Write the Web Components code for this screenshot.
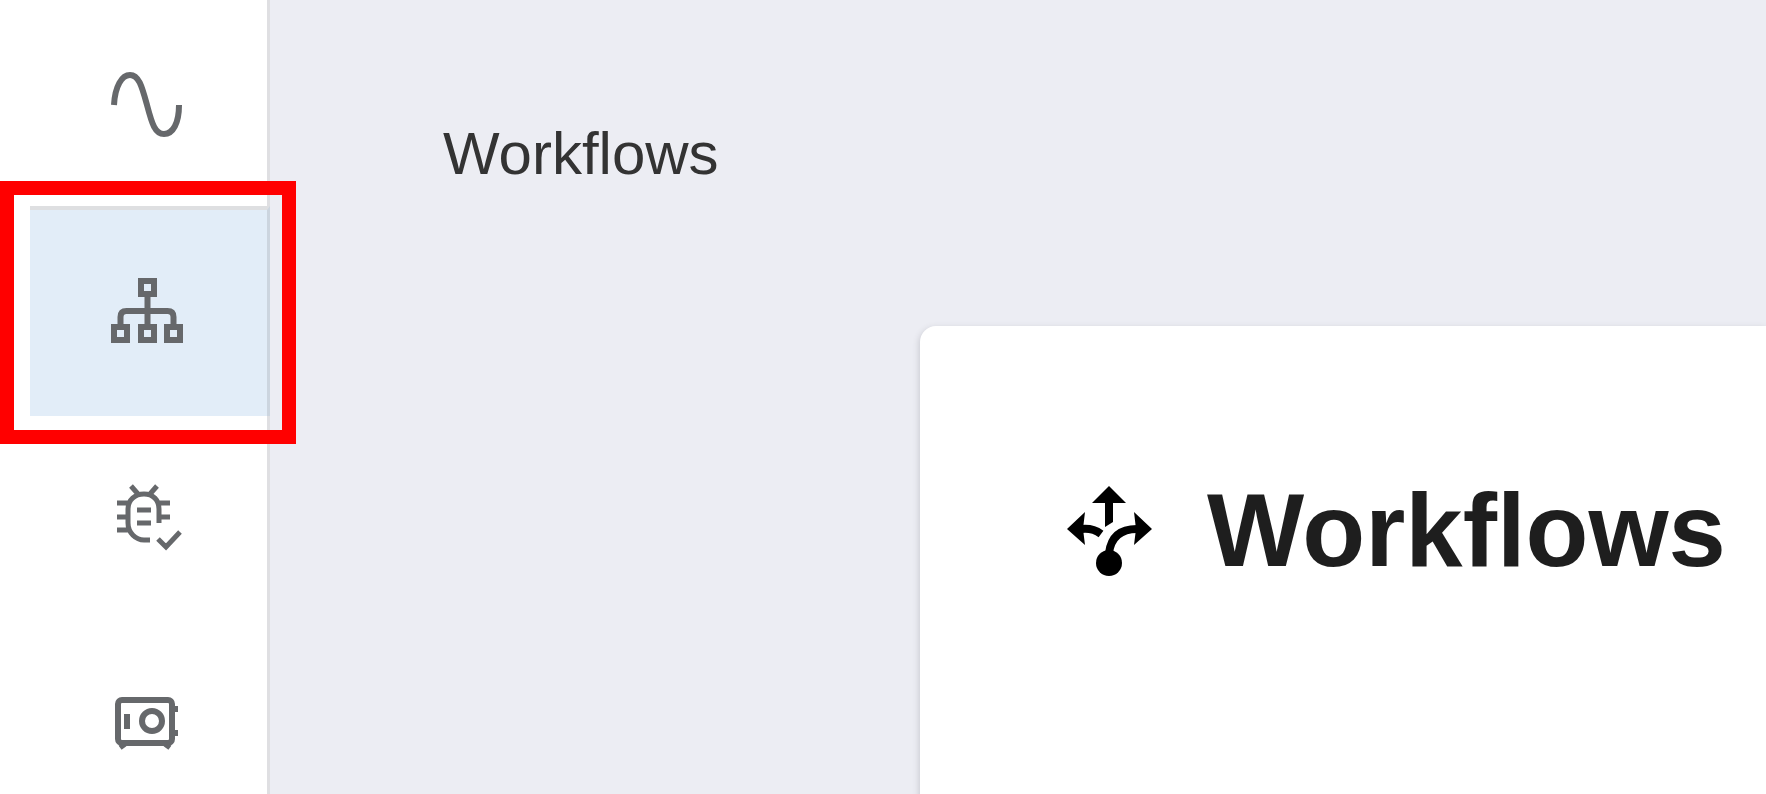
<!DOCTYPE html>
<html lang="en">
<head>
<meta charset="utf-8">
<title>Workflows</title>
<style>
html, body { margin: 0; height: 100%; }
body { font-family: "Liberation Sans", Arial, sans-serif; color: #1e1e1e; background: #ecedf3; }
</style>
</head>
<body>
<app-shell>
  <side-nav slot="nav">
    <nav-item label="Monitoring" icon="wave"></nav-item>
    <nav-item label="Workflow tree" icon="tree" selected></nav-item>
    <nav-item label="Checks" icon="bug"></nav-item>
    <nav-item label="Vault" icon="safe"></nav-item>
  </side-nav>
  <page-title>Workflows</page-title>
  <content-card><card-heading>Workflows</card-heading></content-card>
</app-shell>
<script>
const define = (name, html, setup) => customElements.define(name, class extends HTMLElement {
  connectedCallback() {
    if (this.shadowRoot) return;
    const template = document.createElement('template');
    template.innerHTML = html;
    this.attachShadow({ mode: 'open' }).append(template.content.cloneNode(true));
    if (setup) setup(this, this.shadowRoot);
  }
});

const icons = {
  wave: '<path d="M8 40C9 21 16 10 24 10C33 10 36 22 41 40C46 59 49 69 58 69C67 69 73 58 73 40"/>',
  tree: '<path d="M35 10h13v13h-13zM8 56h13v13h-13zM35 56h13v13h-13zM61 56h13v13h-13zM41.500 23v33M14.500 56v-10q0-6 6-6h41q6 0 6 6v10"/>',
  bug: '<path stroke-width="5" d="M53 46V32C53 23 47 17 38 17S22 23 22 32V46C22 56 30 63 38 63H44M25 9l7 8M51 9l-7 8M11 26h12M11 40h11M11 53h12M52 26h12M53 40h11M31 33h14M31 46h14M52 62l8 8 14-15"/>',
  safe: '<rect x="12" y="17" width="54" height="43" rx="4"/><circle cx="46" cy="38" r="10"/><path d="M21 31v15M15 61l3 4M63 61l-3 4M67 26h5M67 50h5"/>'
};

define('app-shell', `
  <style>
    :host { display: flex; min-height: 100vh; overflow: hidden; }
    main { flex: 1; min-width: 0; display: flex; flex-direction: column; }
  </style>
  <slot name="nav"></slot>
  <main><slot></slot></main>`);

define('side-nav', `
  <style>
    :host { display: block; flex: none; position: relative; z-index: 1; background: #fff; border-right: 3px solid #dfdfe2; }
    nav { width: 237px; padding: 2px 0 0 30px; }
  </style>
  <nav aria-label="Main"><slot></slot></nav>`);

define('nav-item', `
  <style>
    :host { display: block; position: relative; height: 206px; }
    a { display: flex; align-items: center; height: 100%; padding-left: 76px; }
    svg { width: 80px; height: 80px; fill: none; stroke: #66686b; stroke-width: 6; }
    :host([selected]) { height: 210px; margin: -2px -3px -2px 0; }
    :host([selected]) a { box-sizing: border-box; background: #e2edf8; border-top: 4px solid #dedfe1; border-right: 3px solid #ccd5df; padding-bottom: 4px; }
    :host([selected])::after { content: ""; position: absolute; inset: -25px -26px -28px -30px; border: 14px solid #f00; pointer-events: none; }
  </style>
  <a href="#"><svg viewBox="0 0 80 80" aria-hidden="true"></svg></a>`,
  (host, root) => {
    root.querySelector('a').setAttribute('aria-label', host.getAttribute('label'));
    root.querySelector('svg').innerHTML = icons[host.getAttribute('icon')];
  });

define('page-title', `
  <style>
    :host { display: block; padding: 118px 0 136px 173px; font-size: 60px; line-height: 72px; color: #333; }
  </style>
  <slot></slot>`);

define('content-card', `
  <style>
    :host { display: block; flex: 1; margin-left: 650px; padding: 156px 0 0 141px; background: #fff; border-radius: 16px 0 0 0; box-shadow: -1px 2px 6px #c8c9d0; }
  </style>
  <slot></slot>`);

define('card-heading', `
  <style>
    :host { display: flex; align-items: center; gap: 50px; }
    svg { flex: none; width: 96px; height: 96px; }
    h1 { margin: 0; font-size: 103px; line-height: 98px; font-weight: 700; white-space: nowrap; }
  </style>
  <svg viewBox="0 0 96 96" aria-hidden="true">
    <path d="M48 3L65 20H52V39L44 44V20H31zM6 46L24 29L22 46L24 62zM91 46L73 29L75 46L73 62z"/>
    <path d="M21 46Q32 45 40 51M48 70Q51 46 76 46" fill="none" stroke="#000" stroke-width="8"/>
    <circle cx="48" cy="80" r="13"/>
  </svg>
  <h1><slot></slot></h1>`);
</script>
</body>
</html>
